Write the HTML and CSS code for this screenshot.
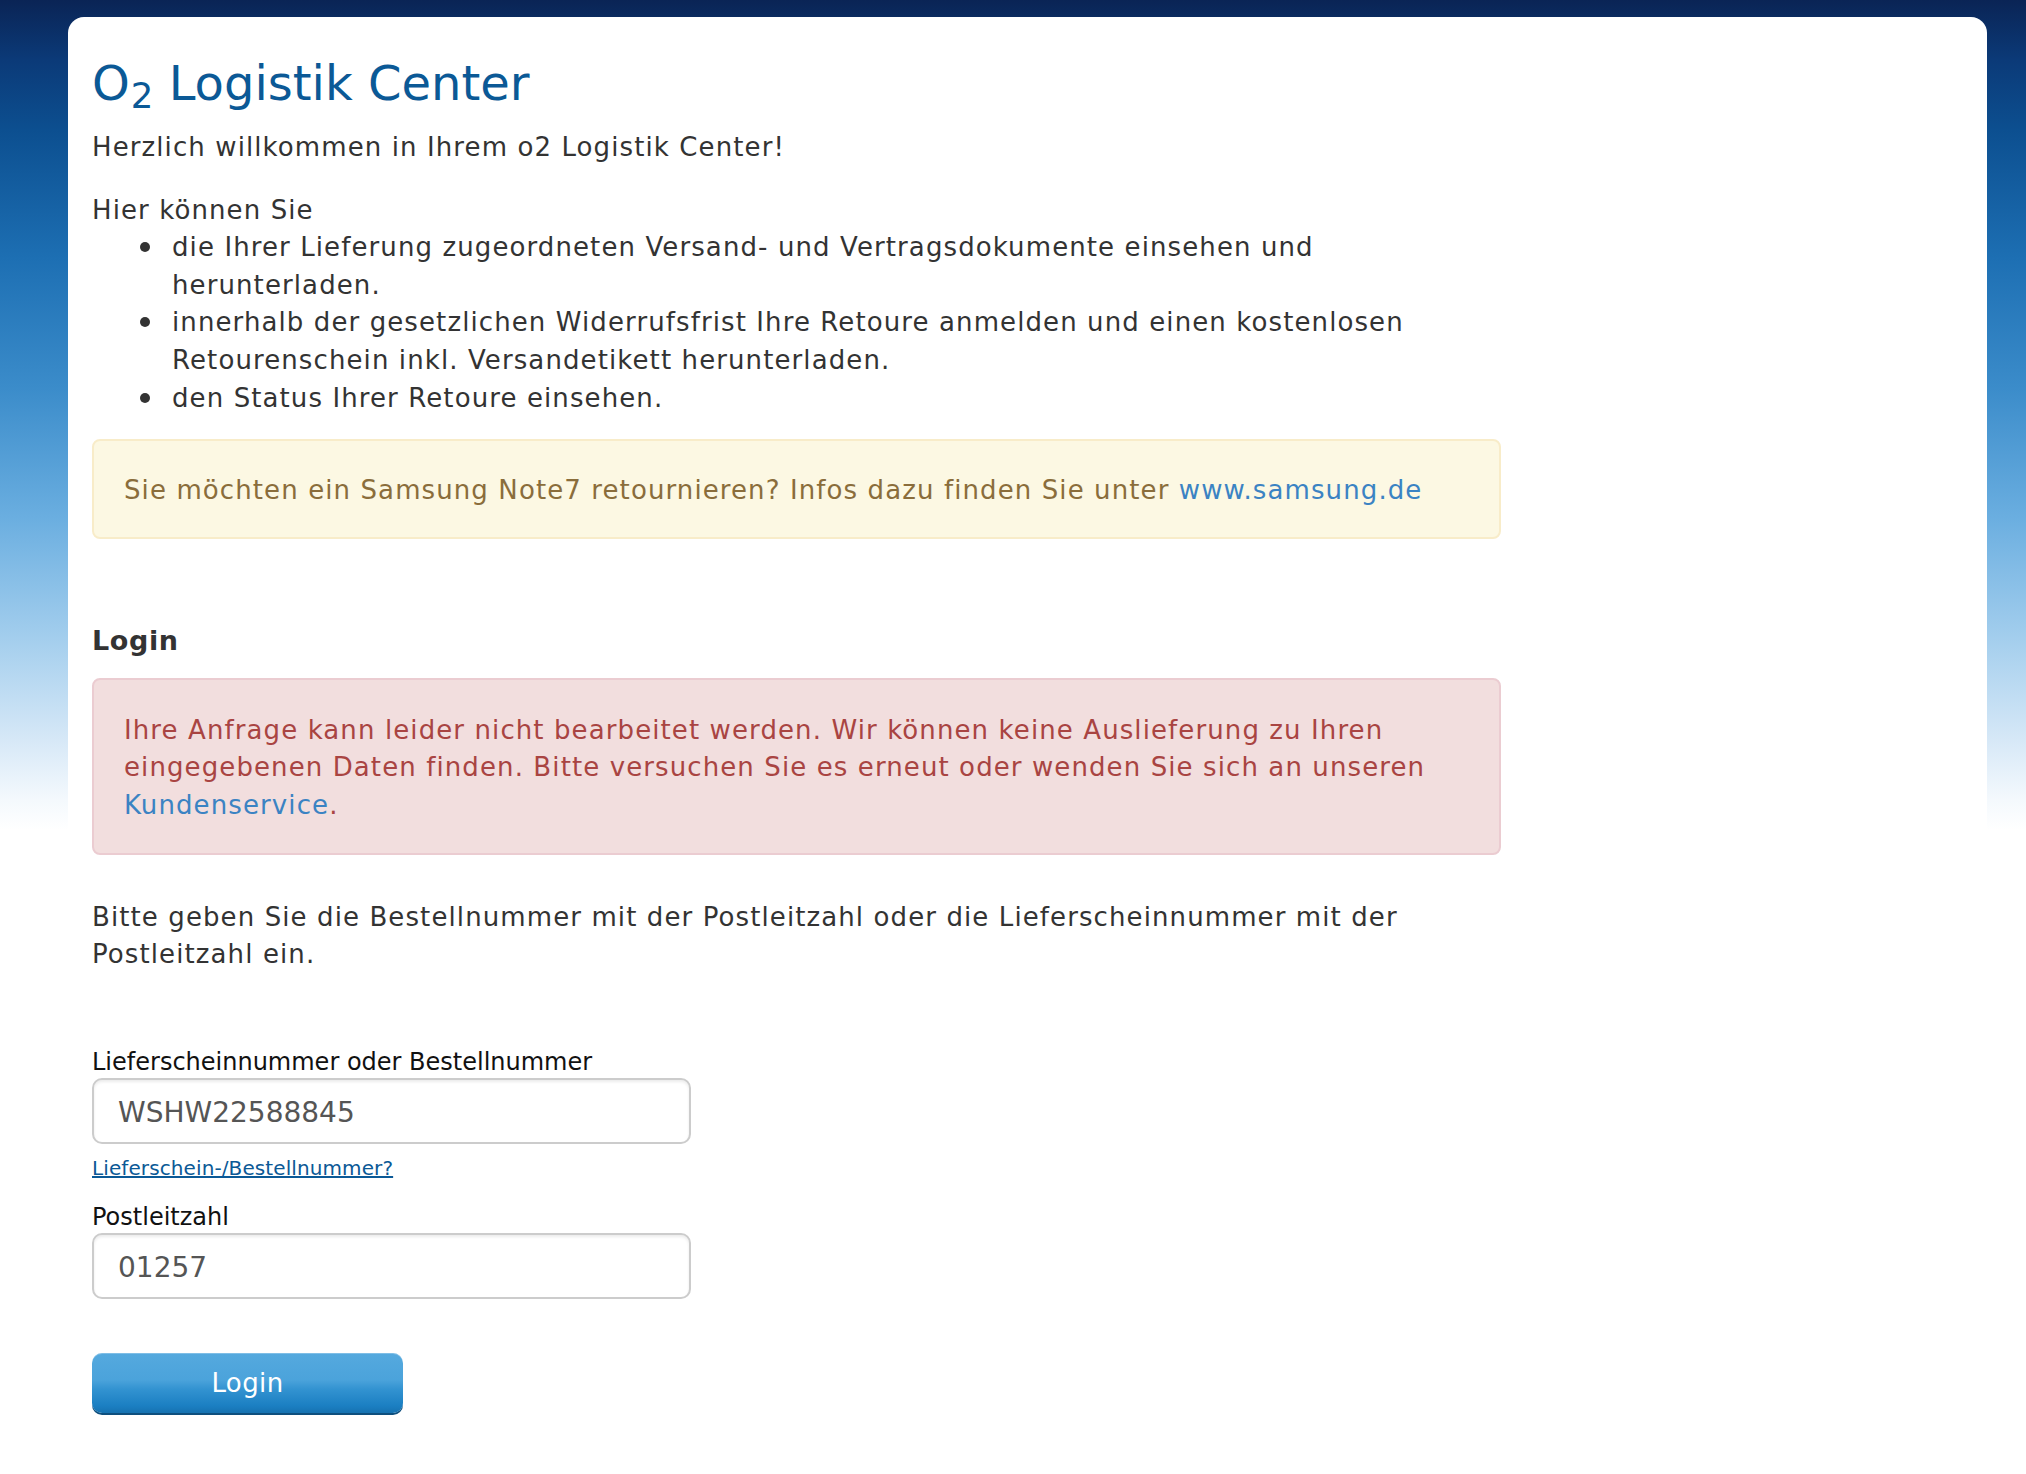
FILE: index.html
```html
<!DOCTYPE html>
<html lang="de">
<head>
<meta charset="utf-8">
<title>O2 Logistik Center</title>
<link rel="stylesheet" href="styles.css">
</head>
<body>
<div class="page">
  <main class="card">
    <div class="content">
      <h1 class="title">O<sub>2</sub> Logistik Center</h1>
      <p class="welcome">Herzlich willkommen in Ihrem o2 Logistik Center!</p>
      <div class="intro">
        <p>Hier können Sie</p>
        <ul class="features">
          <li>die Ihrer Lieferung zugeordneten Versand- und Vertragsdokumente einsehen und herunterladen.</li>
          <li>innerhalb der gesetzlichen Widerrufsfrist Ihre Retoure anmelden und einen kostenlosen Retourenschein inkl. Versandetikett herunterladen.</li>
          <li>den Status Ihrer Retoure einsehen.</li>
        </ul>
      </div>
      <div class="alert alert-warning">Sie möchten ein Samsung Note7 retournieren? Infos dazu finden Sie unter <a href="#">www.samsung.de</a></div>
      <h2 class="login-heading">Login</h2>
      <div class="alert alert-danger">Ihre Anfrage kann leider nicht bearbeitet werden. Wir können keine Auslieferung zu Ihren eingegebenen Daten finden. Bitte versuchen Sie es erneut oder wenden Sie sich an unseren <a href="#">Kundenservice</a>.</div>
      <p class="hint">Bitte geben Sie die Bestellnummer mit der Postleitzahl oder die Lieferscheinnummer mit der Postleitzahl ein.</p>
      <form class="login-form">
        <label class="field-label" for="order">Lieferscheinnummer oder Bestellnummer</label>
        <input class="field-input" id="order" type="text" value="WSHW22588845">
        <a class="help-link" href="#">Lieferschein-/Bestellnummer?</a>
        <label class="field-label second" for="zip">Postleitzahl</label>
        <input class="field-input" id="zip" type="text" value="01257">
        <button class="login-button" type="button">Login</button>
      </form>
    </div>
  </main>
</div>
</body>
</html>
```

FILE: styles.css
```css
html, body {
  margin: 0;
  padding: 0;
}

body {
  background: #ffffff linear-gradient(to bottom,
    #0a2455 0px,
    #0b3a78 60px,
    #0c4f90 130px,
    #1d6fb3 258px,
    #3b8cca 388px,
    #6aaee0 517px,
    #a7d0ee 646px,
    #d6e8f7 740px,
    #f4f9fd 800px,
    #ffffff 830px) no-repeat;
  background-size: 100% 830px;
  font-family: "DejaVu Sans", Verdana, sans-serif;
  color: #333333;
}

.page {
  min-height: 1474px;
  padding: 17px 39px 0 68px;
  box-sizing: border-box;
  overflow: hidden;
}

.card {
  background: #ffffff;
  border-radius: 16px 16px 0 0;
  min-height: 1500px;
  padding: 37px 24px 0 24px;
}

.content {
  width: 1409px;
  display: flex;
  flex-direction: column;
  font-size: 26px;
  line-height: 37.6px;
  letter-spacing: 1.1px;
}

.title {
  margin: 0;
  font-size: 48px;
  line-height: 58px;
  font-weight: normal;
  letter-spacing: 0;
  color: #0b5996;
}

.title sub {
  font-size: 0.74em;
  line-height: 0;
  vertical-align: -0.22em;
  margin-left: 1px;
}

.welcome {
  margin: 17px 0 0 0;
}

.intro {
  margin-top: 25px;
}

.intro p {
  margin: 0;
}

.features {
  margin: 0;
  padding-left: 80px;
  list-style: none;
}

.features li::before {
  content: "";
  display: inline-block;
  width: 10px;
  height: 10px;
  border-radius: 50%;
  background: #333333;
  margin-left: -32px;
  margin-right: 22px;
  vertical-align: 4px;
}

.alert {
  border: 2px solid transparent;
  border-radius: 8px;
  padding: 31px 30px 27px 30px;
}

.alert a {
  color: #3b83c3;
  text-decoration: none;
}

.alert-warning {
  margin-top: 22px;
  background: #fcf8e3;
  border-color: #f8ecc9;
  color: #8a6d3b;
}

.login-heading {
  margin: 82px 0 0 0;
  font-size: 27px;
  line-height: 40px;
  font-weight: bold;
  letter-spacing: 0.6px;
  color: #333333;
}

.alert-danger {
  margin-top: 17px;
  padding-top: 32px;
  padding-bottom: 28px;
  background: #f2dede;
  border-color: #ebccd1;
  color: #a94442;
}

.hint {
  margin: 44px 0 0 0;
}

.login-form {
  display: flex;
  flex-direction: column;
  align-items: flex-start;
  margin-top: 72px;
}

.field-label {
  font-size: 24px;
  line-height: 32px;
  letter-spacing: 0;
  color: #111111;
}

.field-label.second {
  margin-top: 19px;
}

.field-input {
  margin-top: 0;
  width: 599px;
  height: 66px;
  box-sizing: border-box;
  border: 2px solid #cccccc;
  border-radius: 10px;
  padding: 3px 24px 0 24px;
  font-family: "DejaVu Sans", Verdana, sans-serif;
  font-size: 28px;
  color: #555555;
  background: #ffffff;
  box-shadow: inset 0 2px 3px rgba(0, 0, 0, 0.08);
  outline: none;
}

.help-link {
  margin-top: 10px;
  font-size: 20px;
  line-height: 28px;
  letter-spacing: 0.1px;
  color: #0b5996;
  text-decoration: underline;
}

.login-button {
  margin-top: 54px;
  width: 311px;
  height: 60px;
  border: none;
  border-radius: 10px;
  background: linear-gradient(to bottom,
    #55a9de 0%,
    #4ba3db 45%,
    #3393d1 60%,
    #1b7fc2 88%,
    #1672b0 100%);
  box-shadow: 0 2px 0 #0e4f7e, inset 0 1px 0 rgba(255, 255, 255, 0.25);
  color: #ffffff;
  font-family: "DejaVu Sans", Verdana, sans-serif;
  font-size: 26px;
  letter-spacing: 0.4px;
  padding: 0;
  cursor: pointer;
}
```
